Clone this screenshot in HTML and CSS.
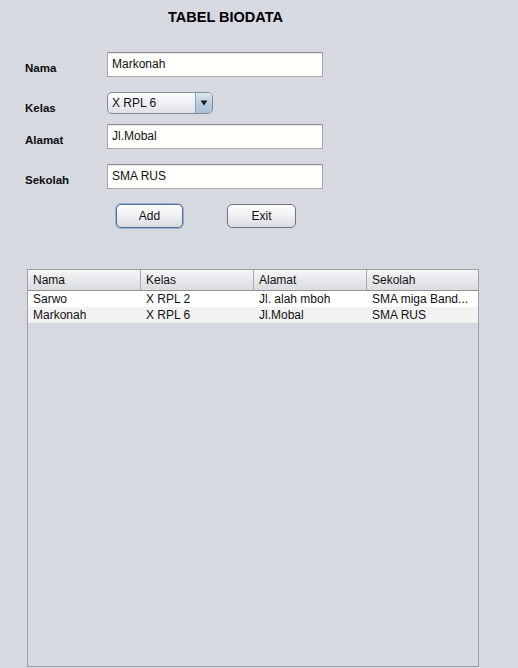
FILE: index.html
```html
<!DOCTYPE html>
<html>
<head>
<meta charset="utf-8">
<link rel="stylesheet" href="styles.css">
</head>
<body>
<div class="frame">
  <h1 class="title">TABEL BIODATA</h1>
  <div class="form">
    <div class="row row-nama">
      <span class="label">Nama</span>
      <div class="field">Markonah</div>
    </div>
    <div class="row row-kelas">
      <span class="label">Kelas</span>
      <div class="combo">
        <span class="combo-text">X RPL 6</span>
        <span class="combo-arrow"><svg width="8" height="6" viewBox="0 0 8 6"><path d="M0.5 0.5 H7.5 L4 5.5 Z" fill="#1a1a1a"/></svg></span>
      </div>
    </div>
    <div class="row row-alamat">
      <span class="label">Alamat</span>
      <div class="field">Jl.Mobal</div>
    </div>
    <div class="row row-sekolah">
      <span class="label">Sekolah</span>
      <div class="field">SMA RUS</div>
    </div>
    <div class="buttons">
      <button class="btn btn-focus">Add</button>
      <button class="btn btn-exit">Exit</button>
    </div>
  </div>
  <div class="table">
    <div class="thead">
      <div class="th">Nama</div>
      <div class="th">Kelas</div>
      <div class="th">Alamat</div>
      <div class="th th-last">Sekolah</div>
    </div>
    <div class="tr tr-odd">
      <div class="td">Sarwo</div>
      <div class="td">X RPL 2</div>
      <div class="td">Jl. alah mboh</div>
      <div class="td">SMA miga Band...</div>
    </div>
    <div class="tr tr-even">
      <div class="td">Markonah</div>
      <div class="td">X RPL 6</div>
      <div class="td">Jl.Mobal</div>
      <div class="td">SMA RUS</div>
    </div>
  </div>
</div>
</body>
</html>
```
FILE: styles.css
```css
* { box-sizing: border-box; }
html, body {
  margin: 0;
  padding: 0;
  background: #d6d9df;
  font-family: "Liberation Sans", Arial, sans-serif;
  color: #000;
}
.frame {
  width: 518px;
  height: 668px;
  overflow: hidden;
}
.title {
  margin: 0;
  padding: 9px 0 0 168px;
  font-size: 14.5px;
  line-height: 17px;
  font-weight: bold;
  color: #000;
}
.form {
  padding-top: 26px;
}
.row {
  display: flex;
  align-items: flex-start;
}
.row-kelas { margin-top: 15px; }
.row-alamat { margin-top: 9px; }
.row-sekolah { margin-top: 15px; }
.label {
  width: 107px;
  padding: 9px 0 0 25px;
  font-size: 11.5px;
  line-height: 14px;
  font-weight: bold;
  color: #0d0d0d;
}
.field {
  width: 216px;
  height: 25px;
  background: #fffffb;
  border: 1px solid #a4a6aa;
  border-top-color: #8c8e92;
  box-shadow: inset 0 1px 0 #e9eae6;
  padding-left: 4px;
  font-size: 12px;
  line-height: 23px;
  color: #111;
}
.combo {
  width: 106px;
  height: 22px;
  display: flex;
  border: 1px solid #868a92;
  border-radius: 5px;
  overflow: hidden;
  background: linear-gradient(#fbfbfc, #eceef1 55%, #dfe2e6);
}
.combo-text {
  flex: 1;
  padding-left: 4px;
  font-size: 12px;
  line-height: 20px;
  color: #111;
}
.combo-arrow {
  width: 17px;
  display: flex;
  align-items: center;
  justify-content: center;
  border-left: 1px solid #8aa0b8;
  background: linear-gradient(#dbe6f1, #b9cde0 50%, #a9bfd6);
}
.buttons {
  display: flex;
  gap: 44px;
  margin-top: 15px;
  padding-left: 116px;
}
.btn {
  height: 24px;
  margin: 0;
  padding: 0;
  border: 1px solid #6f737a;
  border-radius: 5px;
  background: linear-gradient(#fdfdfd, #eef0f2 50%, #d9dce0);
  font-family: "Liberation Sans", Arial, sans-serif;
  font-size: 12px;
  color: #111;
  line-height: 22px;
}
.btn-focus {
  width: 67px;
  border-color: #5c6e86;
  box-shadow: 0 0 0 1px #8db3dd;
}
.btn-exit {
  width: 69px;
}
.table {
  margin: 41px 0 0 27px;
  width: 452px;
  height: 398px;
  border: 1px solid #9ba0a7;
  background: #d6d9df;
}
.thead, .tr {
  display: grid;
  grid-template-columns: 113px 113px 113px 111px;
}
.thead {
  height: 21px;
  background: linear-gradient(#f4f5f6, #e4e6e9 60%, #d9dce0);
  border-bottom: 1px solid #8f939a;
}
.th {
  font-size: 12px;
  line-height: 20px;
  padding-left: 5px;
  color: #111;
  border-right: 1px solid #a7abb1;
}
.th-last { border-right: none; }
.tr { height: 16px; }
.tr-odd { background: #ffffff; }
.tr-even { background: #f2f2f2; }
.td {
  font-size: 12px;
  line-height: 16px;
  padding-left: 5px;
  color: #111;
  white-space: nowrap;
  overflow: hidden;
}
```
